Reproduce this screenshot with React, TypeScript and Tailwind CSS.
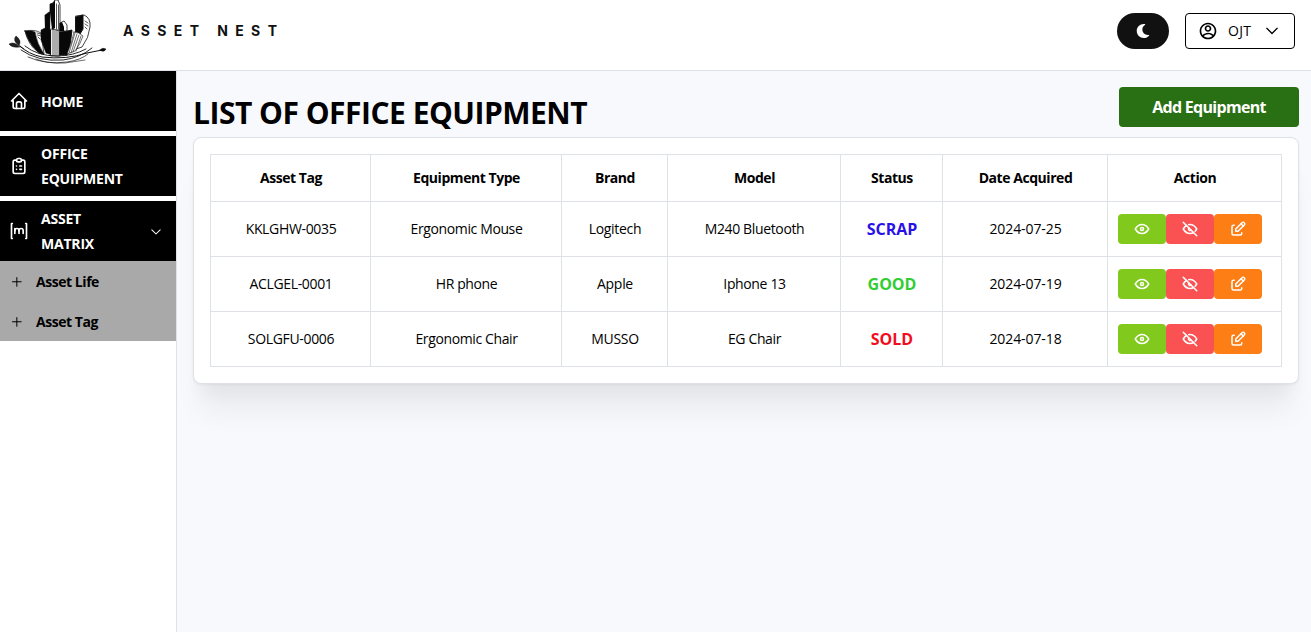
import type { ReactNode } from "react";
import { FaMoon } from "react-icons/fa";
import { GoChevronDown, GoPlus } from "react-icons/go";
import { RiAccountCircleLine } from "react-icons/ri";
import { TbBrandMatrix, TbClipboardList, TbEdit, TbEye, TbEyeOff, TbHome } from "react-icons/tb";

function Logo() {
  return (
    <svg width="100" height="66" viewBox="0 0 100 66" fill="none" stroke="#111" strokeLinecap="round">
      <path d="M17 31 Q27 29 33 33 L36 54 Q34 55 30 52 Q20 45 17 31Z" fill="#fff" strokeWidth="0.7" />
      <path d="M17 31 Q23 30 27 32 Q29 44 36 54 Q31 54 28 50 Q20 42 17 31Z" fill="#080808" strokeWidth="0.5" />
      <path d="M29 33L33 34 M29.500 35L33 36 M30 37L32 39" strokeWidth="0.7" />
      <path d="M37 15 L41 12 H44 V55 L38 53 L33 40 L33 30 L37 28Z" fill="#080808" strokeWidth="0.5" />
      <path d="M42 12 V4 L45 3 L47 0 H50 L52 5 V30 H42Z" fill="#fff" strokeWidth="0.8" />
      <path d="M42 12 V4 L45 3 L47 0 V28 L44 30Z" fill="#080808" stroke="none" />
      <path d="M48.500 4V29 M50.500 5V29" strokeWidth="0.7" />
      <path d="M52 23 L56 21 L59 25 V31 H52Z" fill="#fff" strokeWidth="0.8" />
      <path d="M52 23 L54 22 L56 27 V31 H52Z" fill="#080808" stroke="none" />
      <path d="M43 29 L52 31 V56 H43Z" fill="#fff" strokeWidth="0.7" />
      <path d="M45 30V55 M47 31V55 M49 31V55 M51 31V55" strokeWidth="0.7" />
      <path d="M52 32 Q57 32 64 30 Q63 44 59 55 H52Z" fill="#080808" />
      <path d="M68 16 L76 15 Q83 18 82 27 Q81 38 74 47 L68 49Z" fill="#fff" strokeWidth="0.8" />
      <path d="M68 17 L75 15 L75 29 L72 34 L68 33Z" fill="#080808" />
      <path d="M77 21L80 23 M77 24L80 26 M77 27L79 29" strokeWidth="0.7" />
      <path d="M66 32 Q71 32 75 36 Q72 45 67 51 L59 54 Q64 43 66 32Z" fill="#fff" strokeWidth="0.6" />
      <path d="M67 33L61 53 M69 34L63 53 M71 35L65 52 M73 36L68 51" strokeWidth="0.6" />
      <path d="M12 46 Q20 54 34 57 Q58 60 79 53 L94 50" strokeWidth="1" />
      <path d="M13 50 Q30 62 55 60 Q72 58 84 48" strokeWidth="0.9" />
      <path d="M17 46 Q29 56 49 56 Q65 56 78 49" strokeWidth="0.9" />
      <path d="M20 57 Q38 65 59 62 Q73 60 80 54" strokeWidth="0.7" />
      <path d="M28 59 Q40 64 57 63 L77 60" strokeWidth="0.6" />
      <path d="M11 47 Q4 48 1 44 Q7 41 11 47Z" fill="#222" strokeWidth="0.5" />
      <path d="M11 46 Q4 40 8 36 Q14 40 11 46Z" fill="#222" strokeWidth="0.5" />
      <path d="M11 46L16 49" strokeWidth="0.8" />
      <path d="M92 50 Q94 47 98 49 Q96 53 92 50Z" fill="#080808" strokeWidth="0.5" />
    </svg>
  );
}

function Header() {
  return (
    <header className="flex h-[71px] shrink-0 items-start justify-between border-b border-[#dee2e6] bg-white pr-4 pl-2">
      <div className="flex items-start">
        <Logo />
        <span className="ml-[15px] pt-[21px] font-['Inter'] text-[14px] leading-5 font-bold tracking-[7.4px] whitespace-nowrap text-[#111]">
          ASSET NEST
        </span>
      </div>
      <div className="flex gap-4 pt-[13px]">
        <button className="flex h-9 w-[52px] items-center justify-center rounded-full bg-[#111] text-white">
          <FaMoon size={14} />
        </button>
        <button className="flex h-9 w-[110px] items-center rounded border border-black bg-white pl-3 text-black">
          <RiAccountCircleLine size={20} />
          <span className="ml-2.5 w-[34px] text-left text-sm font-medium tracking-[0.3px]">OJT</span>
          <GoChevronDown size={20} />
        </button>
      </div>
    </header>
  );
}

function NavItem({ icon, label, open }: { icon: ReactNode; label: string; open?: boolean }) {
  return (
    <a className="flex h-[60px] items-center bg-black pr-3 pl-2 text-white">
      <span className="flex w-[22px] justify-center">{icon}</span>
      <span className="ml-[11px] w-[86px] text-sm leading-[25px] font-bold tracking-[-0.2px]">{label}</span>
      {open && <GoChevronDown size={16} className="mt-0.5 ml-auto" />}
    </a>
  );
}

function SubItem({ label }: { label: string }) {
  return (
    <a className="flex h-10 items-center gap-[11px] bg-[#a9a9a9] pt-0.5 pl-[9px] text-black">
      <GoPlus size={16} />
      <span className="text-sm font-bold tracking-[-0.45px]">{label}</span>
    </a>
  );
}

const columns = ["Asset Tag", "Equipment Type", "Brand", "Model", "Status", "Date Acquired", "Action"];
const rows = [
  { tag: "KKLGHW-0035", type: "Ergonomic Mouse", brand: "Logitech", model: "M240 Bluetooth", status: "SCRAP", tone: "text-[#2a10e8]", date: "2024-07-25" },
  { tag: "ACLGEL-0001", type: "HR phone", brand: "Apple", model: "Iphone 13", status: "GOOD", tone: "text-[#32cd32]", date: "2024-07-19" },
  { tag: "SOLGFU-0006", type: "Ergonomic Chair", brand: "MUSSO", model: "EG Chair", status: "SOLD", tone: "text-[#f20d1c]", date: "2024-07-18" },
];

function Action({ tone, children }: { tone: string; children: ReactNode }) {
  return <button className={`flex h-[30px] w-12 items-center justify-center rounded text-white ${tone}`}>{children}</button>;
}

const cell = "border border-[#dee2e6] p-0 pl-px text-center";

function EquipmentTable() {
  return (
    <table className="w-[1072px] table-fixed border-collapse text-sm text-black">
      <colgroup>
        <col className="w-[160px]" />
        <col className="w-[191px]" />
        <col className="w-[106px]" />
        <col className="w-[173px]" />
        <col className="w-[102px]" />
        <col className="w-[165px]" />
        <col className="w-[174px]" />
      </colgroup>
      <thead>
        <tr className="h-[47px]">
          {columns.map((c) => (
            <th key={c} className={`${cell} font-bold tracking-[-0.45px]`}>{c}</th>
          ))}
        </tr>
      </thead>
      <tbody>
        {rows.map((r) => (
          <tr key={r.tag} className="h-[55px]">
            <td className={`${cell} tracking-[-0.34px]`}>{r.tag}</td>
            <td className={`${cell} tracking-[-0.38px]`}>{r.type}</td>
            <td className={`${cell} tracking-[-0.3px]`}>{r.brand}</td>
            <td className={`${cell} tracking-[-0.36px]`}>{r.model}</td>
            <td className={`${cell} pb-px text-base font-bold ${r.tone}`}>{r.status}</td>
            <td className={`${cell} tracking-[-0.08px]`}>{r.date}</td>
            <td className="border border-[#dee2e6] p-0">
              <div className="flex pl-2.5">
                <Action tone="bg-[#82c91e]"><TbEye size={18} /></Action>
                <Action tone="bg-[#fa5252]"><TbEyeOff size={18} /></Action>
                <Action tone="bg-[#fd7e14]"><TbEdit size={18} /></Action>
              </div>
            </td>
          </tr>
        ))}
      </tbody>
    </table>
  );
}

export default function App() {
  return (
    <div className="flex h-screen flex-col overflow-hidden bg-[#f8f9fd] font-['Open_Sans','Noto_Sans',sans-serif]">
      <Header />
      <div className="flex min-h-0 flex-1">
        <nav className="flex w-[177px] shrink-0 flex-col border-r border-[#dee2e6] bg-white">
          <div className="flex flex-col gap-[5px]">
            <NavItem icon={<TbHome size={20} />} label="HOME" />
            <NavItem icon={<TbClipboardList size={20} />} label="OFFICE EQUIPMENT" />
            <NavItem icon={<TbBrandMatrix size={20} />} label="ASSET MATRIX" open />
          </div>
          <SubItem label="Asset Life" />
          <SubItem label="Asset Tag" />
        </nav>
        <main className="flex-1 pt-4 pr-3 pl-4">
          <div className="flex h-[50px] items-start justify-between">
            <h1 className="pt-1.5 text-[30px] leading-10 font-bold tracking-[-0.5px] whitespace-nowrap text-black">
              LIST OF OFFICE EQUIPMENT
            </h1>
            <button className="h-10 w-[180px] rounded bg-[#297014] text-base font-bold tracking-[-0.7px] text-white">
              Add Equipment
            </button>
          </div>
          <section className="h-[247px] rounded-lg border border-[#dee2e6] bg-white p-4 shadow-[0_1px_3px_rgba(0,0,0,0.05),0_36px_28px_-7px_rgba(0,0,0,0.05),0_17px_17px_-7px_rgba(0,0,0,0.04)]">
            <EquipmentTable />
          </section>
        </main>
      </div>
    </div>
  );
}
